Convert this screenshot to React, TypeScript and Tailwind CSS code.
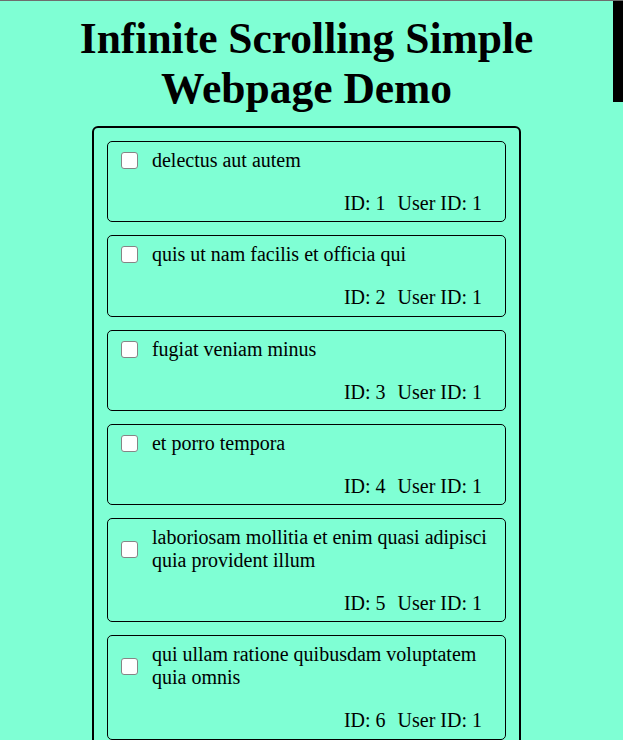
import React from "react";

const todos = [
  { id: 1, userId: 1, title: "delectus aut autem" },
  { id: 2, userId: 1, title: "quis ut nam facilis et officia qui" },
  { id: 3, userId: 1, title: "fugiat veniam minus" },
  { id: 4, userId: 1, title: "et porro tempora" },
  { id: 5, userId: 1, title: "laboriosam mollitia et enim quasi adipisci quia provident illum" },
  { id: 6, userId: 1, title: "qui ullam ratione quibusdam voluptatem quia omnis" },
  { id: 7, userId: 1, title: "illo expedita consequatur quia in" },
  { id: 8, userId: 1, title: "quo adipisci enim quam ut ab" },
];

export default function App() {
  return (
    <div
      className="relative w-[623px] h-[740px] overflow-hidden bg-[#7fffd4] border-t border-[#6e6e6e] text-black"
      style={{ fontFamily: '"Liberation Serif", "Times New Roman", serif' }}
    >
      <div className="w-[613px]">
        <h1 className="pt-[12px] text-center text-[43.5px] leading-[50px] font-bold">
          Infinite Scrolling Simple
          <br />
          Webpage Demo
        </h1>
        <div className="mt-[13px] mx-auto w-[70%] border-2 border-black rounded-[6px] px-[13px] pt-[13px] pb-[13px] flex flex-col gap-[13px]">
          {todos.map((t) => (
            <div
              key={t.id}
              className="border border-black rounded-[5px] pt-[7px] pb-[6.25px] text-[20px] leading-[23px]"
            >
              <div className="flex items-center pl-[13px] pr-[13px]">
                <input
                  type="checkbox"
                  className="appearance-none w-[17px] h-[17px] m-0 shrink-0 bg-white border-[1.5px] border-[#858585] rounded-[3px]"
                />
                <span className="ml-[14px]">{t.title}</span>
              </div>
              <div className="mt-[20px] flex justify-end pr-[23px]">
                <span>ID: {t.id}</span>
                <span className="ml-[12px]">User ID: {t.userId}</span>
              </div>
            </div>
          ))}
        </div>
      </div>
      <div className="absolute right-0 top-0 w-[10px] h-[101px] bg-black" />
    </div>
  );
}
